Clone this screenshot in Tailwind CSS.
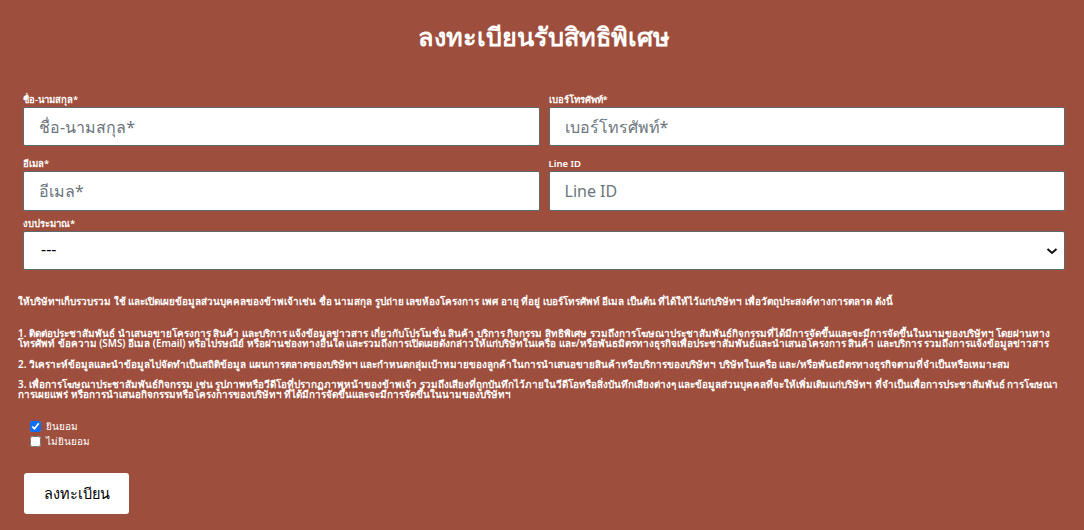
<!DOCTYPE html>
<html lang="th">
<head>
    <meta charset="UTF-8">
    <meta name="viewport" content="width=device-width, initial-scale=1.0">
    <title>ลงทะเบียนรับสิทธิพิเศษ</title>
    <script src="https://cdn.jsdelivr.net/npm/@tailwindcss/browser@4"></script>
</head>
<body class="bg-[#9e4e3c] text-white font-['Noto_Sans','Liberation_Sans',sans-serif] h-[530px] overflow-hidden">
    <h1 class="text-[25.3px] leading-8 font-semibold text-center pt-[20px] pl-[23px] pr-[19px] h-[92px]">ลงทะเบียนรับสิทธิพิเศษ</h1>

    <form class="pl-[23px] pr-[19px]">
        <div class="grid grid-cols-2 gap-x-[9px] gap-y-[10px]">
            <div>
                <label class="block text-[9.5px] font-semibold leading-[15px]">ชื่อ-นามสกุล*</label>
                <input type="text" placeholder="ชื่อ-นามสกุล*" class="w-full h-[39px] bg-white rounded-[2px] border border-[#5f6b6b] px-[15px] text-base text-black placeholder:text-[#6c757d]">
            </div>
            <div>
                <label class="block text-[9.5px] font-semibold leading-[15px]">เบอร์โทรศัพท์*</label>
                <input type="text" placeholder="เบอร์โทรศัพท์*" class="w-full h-[39px] bg-white rounded-[2px] border border-[#5f6b6b] px-[15px] text-base text-black placeholder:text-[#6c757d]">
            </div>
            <div>
                <label class="block text-[9.5px] font-semibold leading-[15px]">อีเมล*</label>
                <input type="text" placeholder="อีเมล*" class="w-full h-[40px] bg-white rounded-[2px] border border-[#5f6b6b] px-[15px] text-base text-black placeholder:text-[#6c757d]">
            </div>
            <div>
                <label class="block text-[9.5px] font-semibold leading-[15px]">Line ID</label>
                <input type="text" placeholder="Line ID" class="w-full h-[40px] bg-white rounded-[2px] border border-[#5f6b6b] px-[15px] text-base text-black placeholder:text-[#6c757d]">
            </div>
        </div>
        <div class="mt-[5px]">
            <label class="block text-[9.5px] font-semibold leading-[15px]">งบประมาณ*</label>
            <div class="flex items-center justify-between h-[39px] bg-white rounded-[2px] border border-[#5f6b6b] pl-[17px] pr-[6px] text-base text-black">
                <span class="-mt-[3px]">---</span>
                <svg class="w-[12px] h-[12px]" viewBox="0 0 12 12" fill="none" stroke="#111" stroke-width="2"><path d="M1.5 4l4.5 4 4.5-4"/></svg>
            </div>
        </div>
    </form>

    <div class="mt-[26px] pl-[18px] pr-[19px] text-[9.9px] font-semibold leading-[10px]">
        <p class="mb-[22px]">ให้บริษัทฯเก็บรวบรวม ใช้ และเปิดเผยข้อมูลส่วนบุคคลของข้าพเจ้าเช่น ชื่อ นามสกุล รูปถ่าย เลขห้องโครงการ เพศ อายุ ที่อยู่ เบอร์โทรศัพท์ อีเมล เป็นต้น ที่ได้ให้ไว้แก่บริษัทฯ เพื่อวัตถุประสงค์ทางการตลาด ดังนี้</p>
        <p class="mb-[11px]">1. ติดต่อประชาสัมพันธ์ นำเสนอขายโครงการ สินค้า และบริการ แจ้งข้อมูลข่าวสาร เกี่ยวกับโปรโมชั่น สินค้า บริการ กิจกรรม สิทธิพิเศษ รวมถึงการโฆษณาประชาสัมพันธ์กิจกรรมที่ได้มีการจัดขึ้นและจะมีการจัดขึ้นในนามของบริษัทฯ โดยผ่านทาง<br>โทรศัพท์ ข้อความ (SMS) อีเมล (Email) หรือไปรษณีย์ หรือผ่านช่องทางอื่นใด และรวมถึงการเปิดเผยดังกล่าวให้แก่บริษัทในเครือ และ/หรือพันธมิตรทางธุรกิจเพื่อประชาสัมพันธ์และนำเสนอโครงการ สินค้า และบริการ รวมถึงการแจ้งข้อมูลข่าวสาร</p>
        <p class="mb-[10px]">2. วิเคราะห์ข้อมูลและนำข้อมูลไปจัดทำเป็นสถิติข้อมูล แผนการตลาดของบริษัทฯ และกำหนดกลุ่มเป้าหมายของลูกค้าในการนำเสนอขายสินค้าหรือบริการของบริษัทฯ บริษัทในเครือ และ/หรือพันธมิตรทางธุรกิจตามที่จำเป็นหรือเหมาะสม</p>
        <p>3. เพื่อการโฆษณาประชาสัมพันธ์กิจกรรม เช่น รูปภาพหรือวีดีโอที่ปรากฏภาพหน้าของข้าพเจ้า รวมถึงเสียงที่ถูกบันทึกไว้ภายในวีดีโอหรือสิ่งบันทึกเสียงต่างๆ และข้อมูลส่วนบุคคลที่จะให้เพิ่มเติมแก่บริษัทฯ ที่จำเป็นเพื่อการประชาสัมพันธ์ การโฆษณา<br>การเผยแพร่ หรือการนำเสนอกิจกรรมหรือโครงการของบริษัทฯ ที่ได้มีการจัดขึ้นและจะมีการจัดขึ้นในนามของบริษัทฯ</p>
    </div>

    <div class="mt-[20px] pl-[30px] text-[10px] font-medium leading-[15px]">
        <label class="flex items-center gap-[5px]"><input type="checkbox" checked class="w-[11px] h-[11px] accent-[#0d6efd]"><span>ยินยอม</span></label>
        <label class="flex items-center gap-[5px]"><input type="checkbox" class="w-[11px] h-[11px]"><span>ไม่ยินยอม</span></label>
    </div>

    <button type="button" class="block ml-[24px] mt-[24px] w-[105px] h-[41px] bg-white rounded-[3px] text-black text-[14.5px] font-medium">ลงทะเบียน</button>
</body>
</html>
